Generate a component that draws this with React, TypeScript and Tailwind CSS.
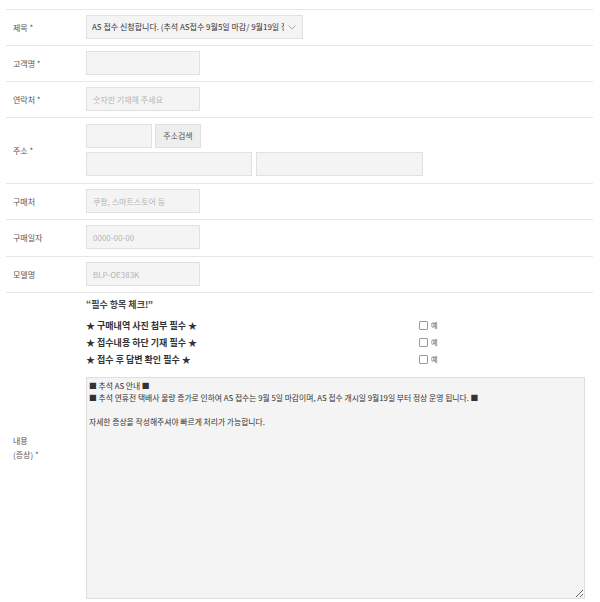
import React from 'react';

const font = "font-['Noto_Sans_CJK_KR','Noto_Sans',sans-serif]";
const inputCls =
  'block h-[24px] bg-[#f4f4f4] border border-[#e1e1e1] px-[6px] text-[8px] text-[#444] placeholder:text-[#b5b5b5] outline-none';

function Row({ label, children, pad = 'pt-[5px] pb-[6px]' }: { label: React.ReactNode; children: React.ReactNode; pad?: string }) {
  return (
    <div className="flex border-b border-[#e6e6e6]">
      <div className="w-[80px] shrink-0 pl-[7px] flex items-center text-[8px] text-[#555] leading-[14px]">{label}</div>
      <div className={`flex-1 flex flex-col items-start ${pad}`}>{children}</div>
    </div>
  );
}

const notice = `■ 추석 AS 안내 ■
■ 추석 연휴전 택배사 물량 증가로 인하여 AS 접수는 9월 5일 마감이며, AS 접수 개시일 9월19일 부터 정상 운영 됩니다. ■

자세한 증상을 작성해주셔야 빠르게 처리가 가능합니다.`;

const checks = ['★ 구매내역 사진 첨부 필수 ★', '★ 접수내용 하단 기재 필수 ★', '★ 접수 후 답변 확인 필수 ★'];

export default function App() {
  return (
    <div className={`${font} bg-white min-h-[602px] overflow-hidden`}>
      <div className="ml-[6px] w-[587px] mt-[9px] border-t border-[#e6e6e6]">
        <Row label="제목 *">
          <div className="w-[217px] h-[24px] bg-[#f4f4f4] border border-[#e1e1e1] flex items-center pl-[5px] pr-[6px] gap-[4px]">
            <span className="flex-1 overflow-hidden whitespace-nowrap text-[8px] leading-[12px] text-[#333]">
              AS 접수 신청합니다. (추석 AS접수 9월5일 마감/ 9월19일 정
            </span>
            <svg width="8" height="5" viewBox="0 0 8 5" className="shrink-0">
              <polyline points="0.5,0.5 4,4 7.5,0.5" fill="none" stroke="#999" strokeWidth="0.8" />
            </svg>
          </div>
        </Row>
        <Row label="고객명 *">
          <input className={`${inputCls} w-[114px]`} />
        </Row>
        <Row label="연락처 *">
          <input className={`${inputCls} w-[114px]`} placeholder="숫자만 기재해 주세요" />
        </Row>
        <Row label="주소 *" pad="pt-[6px] pb-[7px]">
          <div className="flex flex-col gap-[4px]">
            <div className="flex gap-[3px]">
              <input className={`${inputCls} w-[66px]`} />
              <button className="block h-[24px] w-[46px] bg-[#eeeeee] border border-[#e1e1e1] text-[8px] text-[#555]">주소검색</button>
            </div>
            <div className="flex gap-[4px]">
              <input className={`${inputCls} w-[166px]`} />
              <input className={`${inputCls} w-[167px]`} />
            </div>
          </div>
        </Row>
        <Row label="구매처">
          <input className={`${inputCls} w-[114px]`} placeholder="쿠팡, 스마트스토어 등" />
        </Row>
        <Row label="구매일자" pad="pt-[5px] pb-[7px]">
          <input className={`${inputCls} w-[114px]`} placeholder="0000-00-00" />
        </Row>
        <Row label="모델명">
          <input className={`${inputCls} w-[114px]`} placeholder="BLP-OE383K" />
        </Row>
        <Row
          label={
            <div>
              <div>내용</div>
              <div>(증상) *</div>
            </div>
          }
          pad="pt-[4px] pb-[4px]"
        >
          <div className="text-[9px] font-bold text-[#444] leading-[16px]">“필수 항목 체크!”</div>
          <div className="mt-[4px]">
            {checks.map((c) => (
              <div key={c} className="grid grid-cols-[333px_auto] items-center leading-[17px]">
                <span className="text-[9px] font-bold text-[#333]">{c}</span>
                <label className="flex items-center gap-[3px] text-[7px] text-[#555]">
                  <span className="w-[9px] h-[9px] border border-[#999] bg-white rounded-[1px]" />
                  예
                </label>
              </div>
            ))}
          </div>
          <textarea
            readOnly
            defaultValue={notice}
            className={`${font} mt-[9px] block w-[499px] h-[222px] bg-[#f4f4f4] border border-[#dedede] px-[2px] py-[2px] text-[7.8px] leading-[12px] text-[#333] outline-none`}
          />
        </Row>
      </div>
    </div>
  );
}
